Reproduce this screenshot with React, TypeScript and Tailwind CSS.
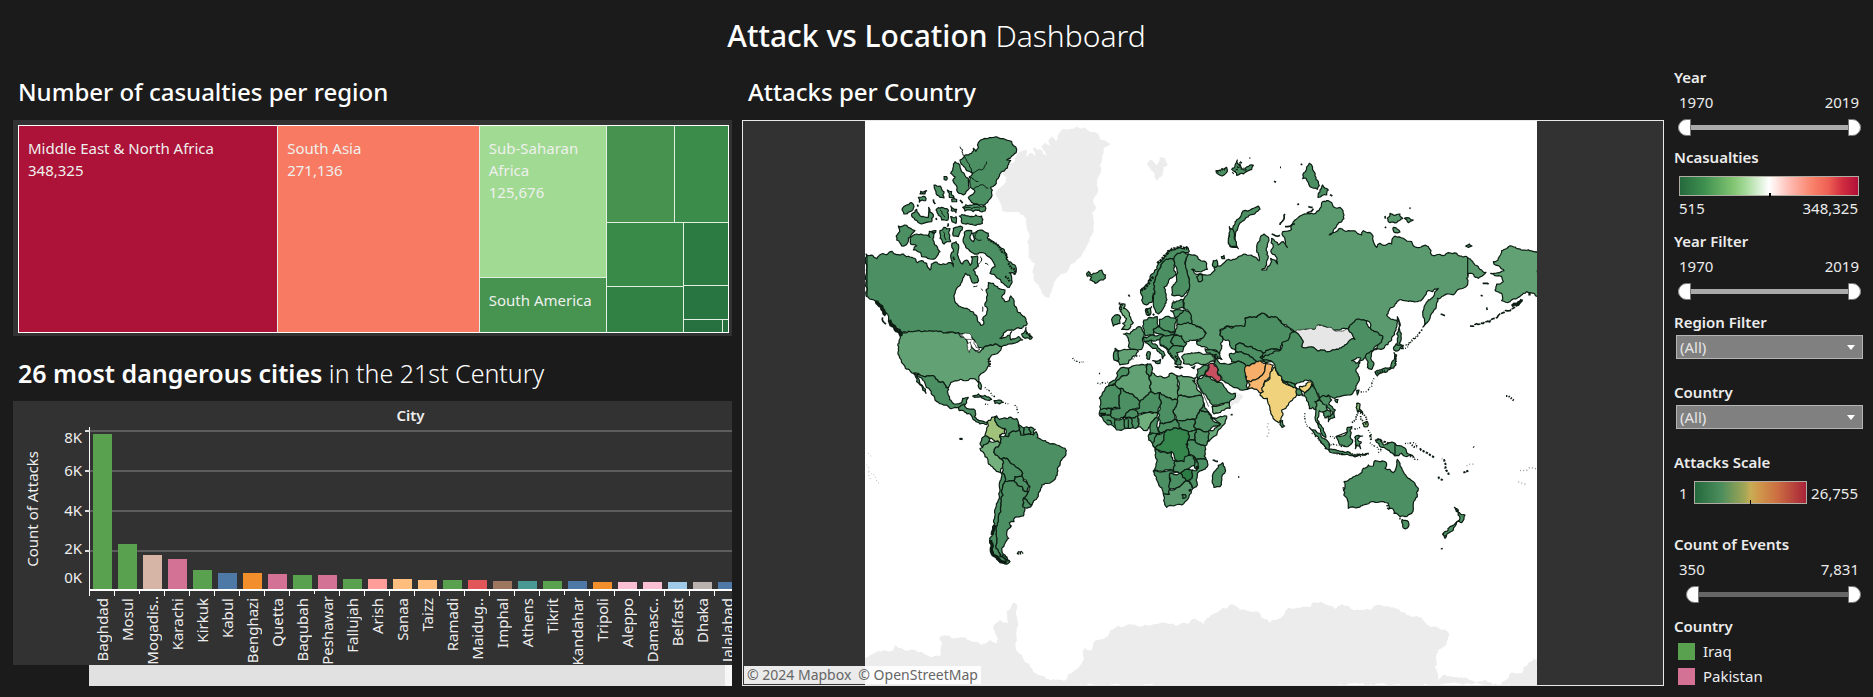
import React from "react";

/* ---------- Map data: outlines are stored per tile at three units per pixel ---------- */

type Shape = [fill: string, points: string];

const G = "#4b8f63";
const G2 = "#5a9a6e";
const G3 = "#61a173";
const G4 = "#70ae7e";

function parse(points: string): number[][] {
  return points.trim().split(/\s+/).map((p) => p.split(",").map(Number));
}

// Adds small bends to an edge; the same edge always bends the same way, so shared borders stay joined.
function bend(a: number[], b: number[], out: number[][]) {
  const len = Math.hypot(b[0] - a[0], b[1] - a[1]);
  if (len < 8) {
    out.push(b);
    return;
  }
  const flip = a[0] > b[0] || (a[0] === b[0] && a[1] > b[1]);
  const [p, q] = flip ? [b, a] : [a, b];
  const h = Math.sin(p[0] * 12.9898 + p[1] * 78.233 + q[0] * 37.719 + q[1] * 11.13) * 43758.5453;
  const r = (h - Math.floor(h) - 0.5) * Math.min(len * 0.42, 9);
  const mid = [
    Math.round((p[0] + q[0]) * 5 - ((q[1] - p[1]) / len) * r * 10) / 10,
    Math.round((p[1] + q[1]) * 5 + ((q[0] - p[0]) / len) * r * 10) / 10,
  ];
  bend(a, mid, out);
  bend(mid, b, out);
}

function outline(points: string, close = true): string {
  const pts = parse(points);
  const out: number[][] = [pts[0]];
  const n = close ? pts.length : pts.length - 1;
  for (let i = 0; i < n; i++) bend(pts[i], pts[(i + 1) % pts.length], out);
  return "M" + out.map((p) => p.join(",")).join("L") + (close ? "Z" : "");
}

const GREY_NORTH = [
  "768,245 790,225 800,205 788,190 800,180 825,150 835,130 860,120 862,140 872,128 885,138 880,112 905,120 908,132 920,138 905,108 915,98 930,110 925,90 935,78 950,92 960,65 990,58 1010,50 1035,52 1050,65 1075,72 1085,90 1112,102 1090,120 1085,140 1078,165 1082,185 1070,210 1075,240 1062,265 1068,290 1055,310 1062,340 1058,370 1045,400 1030,425 1010,450 990,465 975,490 950,505 940,530 930,562 905,550 890,520 878,490 885,460 865,430 862,400 868,375 858,340 850,315 835,305 810,305 785,300 780,280",
  "1222,158 1235,150 1250,165 1258,142 1275,145 1284,162 1270,172 1268,195 1252,214 1244,190 1232,180",
];

const NORTH_AMERICA: Shape[] = [
  [G, "378,432 398,436 410,446 418,436 440,434 456,424 470,434 490,432 500,440 520,444 532,458 545,452 560,460 570,480 574,462 590,456 600,463 620,462 632,458 640,470 632,440 640,425 636,400 648,395 656,415 655,440 668,462 680,450 690,466 694,440 712,438 714,470 700,480 714,505 712,518 695,515 690,497 676,490 668,505 662,520 650,535 645,550 643,565 648,580 665,592 685,598 700,606 710,618 714,635 722,646 732,640 728,625 740,612 742,595 735,580 740,560 738,540 745,535 745,518 760,520 775,535 795,540 785,560 795,575 808,572 812,558 822,580 832,605 845,615 858,628 860,645 845,655 825,658 805,660 790,670 780,685 800,680 815,665 812,690 835,680 848,690 820,700 800,705 785,710 765,702 748,706 730,716 715,712 705,695 690,680 670,672 655,668 640,667 485,669 470,655 455,640 440,610 425,590 405,572 385,562 378,558"],
  [G3, "487,669 640,667 655,668 662,680 680,690 683,705 700,716 715,727 730,716 748,706 765,702 785,710 775,728 755,735 748,745 748,765 740,778 722,792 716,800 724,825 723,838 716,832 710,812 700,806 690,806 678,812 660,808 645,812 632,818 626,833 618,832 608,815 595,815 580,797 560,798 540,795 520,790 495,770 484,750 476,720 478,690"],
  [G, "530,793 540,795 560,798 580,797 595,815 608,815 618,832 626,838 628,860 635,875 650,882 665,878 668,865 685,862 680,878 672,888 665,895 650,893 630,895 605,882 585,870 582,858 570,840 555,820 540,802"],
  [G, "520,790 530,795 538,812 548,828 558,850 548,840 540,825 530,815"],
  [G, "656,892 672,882 680,895 695,897 706,902 703,920 718,932 742,936 740,944 730,940 720,942 710,936 698,925 690,912 674,906 658,902"],
  [G, "698,858 715,852 735,856 755,868 740,870 722,860"],
  [G, "762,872 775,870 790,877 778,882 765,880"],
  [G, "660,150 675,135 695,130 700,115 708,124 715,98 735,85 760,82 790,86 815,95 830,118 820,135 800,150 812,152 795,180 775,205 765,225 752,232 755,250 745,272 738,280 720,285 700,280 685,262 705,245 690,225 688,200 698,192 680,182 668,165"],
  [G, "645,155 655,160 665,185 685,205 688,235 670,255 650,240 640,215 645,200 632,190 640,170"],
  [G, "668,292 690,285 735,288 735,303 700,305 675,303"],
  [G, "658,318 690,320 725,318 727,340 700,345 665,338"],
  [G, "582,225 600,228 612,245 612,264 600,262 588,245"],
  [G, "622,240 635,245 642,262 628,262"],
  [G, "535,262 555,260 557,272 538,276"],
  [G, "542,244 560,242 555,252 540,252"],
  [G, "486,300 500,285 515,278 522,290 510,305 492,312"],
  [G, "515,312 530,298 545,320 565,322 566,292 580,318 575,335 545,342 525,330"],
  [G, "588,300 605,292 625,300 624,330 605,330 595,315"],
  [G, "632,288 650,298 648,308 634,302"],
  [G, "632,320 648,320 648,340 636,335"],
  [G, "635,268 650,268 650,275 636,275"],
  [G, "475,348 500,346 525,362 505,385 498,405 485,408 470,390"],
  [G, "510,385 530,372 555,375 570,382 568,364 588,362 582,395 600,425 590,440 570,447 545,440 542,428 520,420 530,408 512,402"],
  [G, "600,362 612,352 630,356 632,395 612,402 600,385"],
  [G, "640,355 668,352 655,380 640,378"],
  [G, "672,380 680,362 695,362 690,385 700,395 698,370 720,360 745,370 742,385 765,400 785,415 800,440 805,455 828,472 825,492 808,488 815,510 808,532 790,520 770,503 750,490 765,470 745,440 735,430 718,428 700,430 680,415 672,400"],
  [G, "845,672 858,652 862,668 877,682 870,688 850,682"],
  [G, "612,200 620,200 620,210 612,208"],
];

const NORTH_WATER = [
  "664,676 680,670 695,678 698,688 680,688",
  "684,700 692,696 694,715 688,728 682,716",
  "703,690 712,704 716,715 708,712",
  "706,724 720,716 718,728",
];

const SOUTH_AMERICA: Shape[] = [
  ["#a0c27a", "742,245 755,232 770,228 765,242 772,255 792,260 795,280 780,285 782,308 765,305 750,295 735,288 740,270"],
  [G, "770,228 778,238 800,236 830,236 835,255 838,270 815,275 805,290 795,288 795,265 772,255 765,242"],
  [G, "835,250 852,264 855,285 842,285 838,270"],
  [G, "852,264 868,263 872,283 855,285"],
  [G, "868,263 886,268 880,285 872,283"],
  [G, "780,285 795,288 805,290 815,275 838,270 842,285 855,285 872,283 880,285 888,275 892,293 905,300 925,308 950,315 975,325 978,340 965,360 955,380 952,405 940,422 915,430 902,445 895,465 885,480 876,494 862,485 850,475 865,455 870,440 862,428 848,415 848,400 835,385 815,372 800,355 785,358 775,350 765,345 762,328 775,320 782,308"],
  [G, "725,295 735,288 750,295 748,302 740,312 728,322 720,312"],
  ["#74b07d", "720,325 728,322 740,312 748,302 765,305 782,308 775,320 762,328 765,345 775,350 785,358 788,380 782,398 760,385 745,372 735,350 722,332"],
  [G, "785,358 800,355 815,372 835,385 848,400 845,408 825,410 822,422 795,424 788,400 788,380"],
  [G, "825,410 845,408 850,422 868,438 862,455 848,450 846,440 830,430 822,422"],
  [G, "795,424 822,422 830,430 846,440 848,450 862,455 865,455 850,475 848,495 855,510 850,528 825,532 822,545 808,548 812,562 802,570 800,585 806,595 795,610 785,625 795,645 802,660 780,650 768,625 768,580 775,540 782,490 788,440"],
  [G, "782,398 788,400 795,424 788,440 782,490 775,540 768,580 768,625 780,650 802,660 810,665 795,672 770,658 754,630 750,600 758,570 764,530 775,480 778,430"],
  [G, "850,475 862,485 876,494 865,503 848,500"],
];

const EUROPE: Shape[] = [
  [G, "80,130 86,124 92,134 100,130 125,120 137,135 130,150 105,160 90,150 95,142 82,138"],
  [G4, "182,222 195,222 190,235 205,245 213,268 220,278 210,294 185,298 195,286 188,280 200,266 186,250 178,235"],
  [G, "158,262 172,254 182,262 180,280 160,288"],
  [G, "242,180 265,160 280,130 295,100 320,70 350,55 380,50 388,64 370,66 342,85 310,95 300,115 285,150 285,185 278,215 260,225 245,210"],
  [G, "285,185 285,150 300,115 310,95 330,85 342,92 348,130 330,145 325,158 312,172 318,200 310,235 295,252 285,238 280,210"],
  [G, "342,85 360,70 370,66 385,72 378,90 380,120 388,150 388,175 365,200 335,195 340,165 350,148 348,110"],
  [G, "258,236 275,230 270,255 262,256"],
  [G, "252,270 268,262 292,260 298,290 280,298 285,318 258,318 250,295"],
  [G, "298,268 330,262 350,270 347,305 315,302 298,290"],
  [G, "338,218 372,208 372,235 350,238 335,234"],
  [G, "332,242 350,238 372,240 362,262 345,262"],
  [G, "350,262 372,240 390,250 395,280 352,284"],
  [G2, "350,285 395,281 425,295 438,310 425,325 410,335 412,328 390,330 375,338 365,318 342,312"],
  [G2, "190,312 210,312 225,298 240,290 252,310 248,325 250,345 245,358 220,360 205,350 205,325"],
  [G3, "165,355 205,358 235,364 215,385 205,400 180,405 175,392"],
  [G, "165,362 177,362 175,395 162,390"],
  [G, "280,298 298,290 315,302 345,305 342,314 310,315 285,308"],
  [G, "250,322 285,318 310,315 300,330 275,332 252,334"],
  [G, "255,335 275,330 278,342 300,358 315,376 308,386 300,370 275,352 262,340"],
  [G, "278,392 302,388 300,400"],
  [G, "262,366 270,366 268,388 260,385"],
  [G, "300,330 310,315 342,314 332,335 340,350 325,362 300,342"],
  [G, "342,314 365,318 380,340 372,350 340,350 332,335"],
  [G, "335,350 372,350 368,365 350,368 358,385 362,405 345,402 332,378 325,362"],
  ["#69a97a", "365,380 380,372 420,368 455,372 464,395 440,402 420,402 392,406 370,400"],
  [G, "435,356 462,362 478,372 486,388 470,386 458,374 440,368"],
  [G, "395,412 405,408 402,416"],
  [G, "345,410 368,412 360,416"],
  [G, "480,300 500,288 520,292 555,288 555,265 590,262 605,250 625,262 645,260 665,280 690,295 708,308 695,320 690,330 665,345 662,360 630,358 610,370 590,360 560,350 540,338 528,345 528,365 515,355 505,330 490,328 480,315"],
  [G, "528,345 540,338 560,350 590,360 610,370 622,378 615,395 598,396 570,380 548,368 528,365"],
  [G, "508,372 528,365 548,368 570,380 598,396 575,402 558,408 535,393 515,396"],
  [G, "600,382 610,370 630,358 662,360 656,374 632,380 640,394 618,398"],
  [G, "462,374 475,395 500,402 515,400 535,393 558,408 556,440 562,478 535,475 510,465 485,450 472,430 470,410 462,400"],
  ["#c64f60", "445,405 460,400 470,410 472,430 482,450 470,455 450,440 435,432 445,418"],
  ["#f7ae6a", "558,408 575,402 605,396 618,400 615,415 600,440 585,450 560,452 556,430"],
  ["#f8b76f", "562,478 570,465 560,452 585,450 600,440 615,415 618,400 640,405 635,425 625,445 610,465 612,485 598,488 590,478"],
];

const AFRICA: Shape[] = [
  [G, "188,22 205,25 205,42 180,55 165,72 150,82 146,76 165,60 170,40"],
  [G, "165,72 180,86 180,145 150,145 122,148 118,115 130,95 140,80"],
  [G3, "205,25 230,15 262,12 260,30 268,50 272,95 240,125 180,86 165,72 180,55 205,42"],
  [G, "262,12 272,12 275,38 268,50 260,30"],
  [G3, "268,50 275,38 300,48 320,52 330,40 352,48 352,120 300,98 285,102 272,95"],
  [G3, "352,48 375,50 400,55 412,50 405,65 398,62 425,108 355,108"],
  [G, "180,86 240,125 238,145 210,150 190,172 165,178 150,165 158,148 180,145"],
  [G, "240,125 272,95 285,102 300,98 300,140 292,158 240,162 225,150 238,145"],
  [G, "300,98 352,120 340,150 345,178 320,188 300,190 296,175 300,140"],
  [G2, "355,108 425,108 432,130 420,150 405,178 375,182 348,178 340,150 352,120"],
  [G, "348,178 375,182 405,178 408,208 385,215 362,205"],
  [G, "420,150 445,155 456,178 480,190 445,214 430,215 408,208 405,178"],
  [G, "432,130 440,148 458,174 452,174 440,155 420,150"],
  ["#6cab7c", "456,176 475,172 500,168 495,190 470,225 446,245 445,214 482,192"],
  [G, "408,208 430,215 445,214 446,240 435,258 405,240"],
  [G, "385,215 408,208 405,240 384,240"],
  [G, "384,240 405,240 435,258 438,298 410,298 385,285 380,262"],
  [G, "120,150 140,148 158,148 150,165 138,168 120,168 118,158"],
  [G, "122,168 150,165 165,178 168,205 145,195 130,180"],
  [G, "165,178 190,175 195,205 170,210"],
  [G, "190,172 210,150 225,150 235,165 215,175"],
  [G, "195,176 215,175 218,203 196,206"],
  [G, "215,175 232,168 234,200 220,204"],
  [G4, "236,165 262,158 292,158 290,172 270,200 258,212 234,200"],
  [G, "270,200 290,172 296,180 294,205 300,222 268,220"],
  [G, "300,190 320,188 345,178 362,205 320,210 300,218 294,205"],
  [G, "266,224 290,222 284,245 280,260 266,240"],
  [G, "290,222 318,212 305,250 285,264 280,258"],
  ["#34864d", "320,210 362,205 385,215 384,240 380,262 385,285 372,305 345,298 335,275 305,275 285,266 305,250"],
  [G, "285,268 310,275 335,278 338,300 345,302 338,332 280,332 292,300"],
  [G, "345,302 372,305 375,290 400,288 408,315 380,328 362,340 340,332"],
  [G, "400,288 408,300 416,320 410,332 404,315"],
  ["#2b7d45", "362,340 380,328 398,330 396,355 378,362 368,352"],
  [G, "410,298 438,298 442,320 412,345 412,375 395,385 388,365 396,355 398,330 410,332 414,316"],
  [G, "280,334 310,334 355,336 330,340 328,405 310,402 295,370"],
  [G, "330,340 362,340 368,352 378,362 345,388 328,385"],
  [G2, "310,402 328,403 328,388 345,388 378,362 388,365 398,385 385,415 365,435 320,442"],
  [G, "366,404 376,404 378,412 368,415"],
  [G, "488,308 495,325 480,380 462,382 458,355 468,330"],
  [G, "412,60 432,44 450,50 465,62 490,75 500,90 508,98 526,100 520,118 508,128 458,136 430,100 415,75"],
  [G4, "456,140 508,128 510,145 462,162"],
  [G, "412,28 440,14 445,25 435,42 432,46 412,60 410,45"],
];

const RUSSIA: Shape[] = [
  [G2, "-35,432 -10,438 20,460 22,478 5,485 -25,478 -18,488 5,492 8,510 -5,515 -10,500 25,495 45,480 40,455 55,468 80,450 105,448 115,440 135,432 160,440 178,452 175,430 170,410 180,385 192,372 203,380 202,410 205,440 200,465 185,480 200,480 210,465 212,445 232,462 230,442 215,430 220,410 215,385 235,405 250,395 262,412 255,390 248,365 275,358 285,330 300,318 340,312 360,295 368,275 385,272 400,290 420,292 432,315 425,335 400,360 388,375 420,355 445,362 470,368 485,375 490,362 515,372 522,400 530,412 540,400 575,402 585,378 610,385 635,395 650,412 685,410 695,435 735,435 745,428 770,430 800,440 825,465 858,487 850,495 835,505 805,490 800,505 798,530 765,550 730,558 712,565 708,595 690,625 672,648 668,605 675,585 700,560 715,535 698,545 680,545 665,570 630,572 595,572 570,595 560,615 578,628 590,630 588,655 575,690 550,716 520,720 548,680 520,665 500,632 475,632 465,645 445,655 400,660 375,650 355,645 345,658 320,658 288,668 270,655 245,640 225,620 205,622 185,610 170,622 135,625 135,648 100,652 80,648 60,660 60,675 70,688 62,700 65,715 60,730 50,722 25,718 5,710 -10,695 5,685 18,670 5,655 -25,640 -30,610 -48,595 -50,575 -45,560 -32,535 -32,510 -40,480 -42,450"],
  [G, "85,400 90,370 105,335 125,310 150,300 175,288 180,298 150,315 125,335 112,360 105,385 112,412 90,410"],
  [G, "316,185 328,160 342,185 345,198 355,215 352,238 330,230 318,205 308,206"],
  [G, "368,225 385,240 380,255 354,262 360,240"],
  [G2, "562,325 570,310 585,316 600,312 608,325 590,338 570,338"],
  [G2, "613,325 640,330 625,338"],
  [G2, "580,352 600,366 585,368"],
  [G, "797,408 808,402 816,408 805,412"],
  [G, "48,182 62,180 80,172 82,184 66,198"],
  [G, "95,178 112,150 122,168 135,180 150,165 160,166 155,178 130,192 110,196"],
  [G, "592,620 598,650 604,670 598,700 610,716 590,716 592,690"],
  [G3, "1013,428 975,420 935,408 905,422 895,445 880,455 900,470 912,482 872,490 885,497 905,500 910,515 890,522 885,540 905,550 905,572 930,575 955,562 970,550 990,548 1013,560"],
];

const ASIA: Shape[] = [
  [G, "45,105 5,85 30,72 62,60 65,40 85,30 90,12 105,5 130,35 125,50 170,60 200,66 235,58 265,35 285,28 268,5 270,-15 285,-28 320,-28 335,0 368,18 360,40 340,60 318,80 296,95 302,84 280,90 275,92 288,100 300,98 288,118 298,150 285,180 265,195 240,200 225,205 205,195 185,200 180,210 165,180 150,150 130,155 105,165 65,148 50,125"],
  ["#f0d27c", "32,125 45,112 52,130 65,148 70,158 105,170 110,195 100,205 85,225 65,240 65,260 55,278 42,268 30,235 22,205 10,205 0,195 10,185 5,175 15,155 30,145"],
  ["#f0d27c", "118,170 135,168 145,156 158,156 152,172 145,180 135,190 122,180"],
  [G, "65,148 105,165 105,172 70,158"],
  [G, "108,172 122,180 130,198 114,196"],
  [G, "60,272 68,272 74,288 66,292"],
  [G, "132,195 145,180 152,172 158,163 168,182 178,205 165,215 168,240 158,232 148,236 140,212"],
  [G3, "165,215 178,210 200,225 202,240 188,246 178,242 172,265 176,285 166,270 168,240"],
  [G, "178,205 190,196 210,198 215,210 206,222 226,240 224,262 205,275 204,262 218,252 200,225 182,212"],
  [G, "188,246 202,240 212,246 210,260 195,264"],
  [G, "172,278 190,295 198,322 182,305"],
  [G, "148,292 165,300 190,325 210,345 208,360 185,340 165,315"],
  [G, "206,360 240,364 270,368 298,372 325,370 295,377 250,373"],
  [G, "228,320 245,318 262,305 262,292 276,290 272,315 278,330 264,350 240,345"],
  [G, "284,322 308,318 292,328 304,336 298,342 302,356 290,345 286,356"],
  ["#82b571", "290,220 300,222 298,238 308,250 292,244"],
  ["#82b571", "308,280 322,275 322,290 312,290"],
  [G, "346,330 362,328 370,345 386,338 405,340 430,352 440,368 462,382 440,380 425,370 405,378 388,362 366,352"],
  [G, "290,182 297,180 292,195"],
  [G, "224,210 234,208 232,218"],
  [G, "316,78 340,62 332,84 342,102 335,118 322,112 324,95"],
  [G, "345,126 370,116 392,112 402,90 402,68 410,75 408,105 390,118 370,126 352,138"],
  [G, "408,42 430,48 415,62 402,60"],
  [G, "252,455 275,445 295,435 310,415 325,405 340,408 345,392 375,395 380,405 375,415 400,428 408,415 412,388 420,400 430,425 445,445 460,455 475,475 472,500 460,520 455,550 435,560 420,560 402,550 395,535 386,538 385,520 365,515 340,515 310,525 295,532 265,535 262,510 250,480"],
  [G, "425,574 445,575 442,594 430,594"],
  [G, "583,532 600,550 615,555 605,578 590,576 600,562"],
  [G, "590,576 580,600 555,625 548,612 570,590"],
];

const MONGOLIA = "105,5 140,-2 165,-2 175,-15 195,-10 220,0 265,-2 268,5 285,28 265,35 235,58 200,66 170,60 125,50 130,35";

const GREY_SOUTH = [
  "0,330 12,328 45,335 55,312 95,280 103,235 125,240 135,212 175,195 180,180 240,162 260,167 360,162 380,167 408,160 435,145 460,162 470,145 500,128 530,115 548,102 570,122 630,130 660,158 680,150 720,112 780,112 785,98 825,102 855,116 875,103 905,118 965,118 980,105 1030,112 1070,135 1110,142 1145,170 1185,178 1198,195 1190,222 1165,240 1155,290 1165,330 1180,315 1235,322 1275,335 1350,345 0,350",
  "1350,345 1375,325 1385,308 1415,310 1420,290 1450,267 1465,266 1465,350",
];

const GREY_SOUTH_WEST =
  "372,960 410,935 460,930 465,915 490,928 545,935 570,950 600,950 598,890 630,888 690,902 725,915 750,900 770,910 760,865 780,840 805,850 800,815 822,788 832,800 835,940 865,970 895,1005 935,1025 970,1022 990,1000 990,1040 372,1040";

function Regions({ shapes }: { shapes: Shape[] }) {
  return (
    <>
      {shapes.map(([fill, points], i) => (
        <path key={i} d={outline(points)} fill={fill} />
      ))}
    </>
  );
}

function Islands({ lines, width = 3, dash = "3 5 2 4 5 6" }: { lines: string[]; width?: number; dash?: string }) {
  return (
    <>
      {lines.map((l, i) => (
        <path key={i} d={outline(l, false)} fill="none" strokeWidth={width} strokeDasharray={dash} />
      ))}
    </>
  );
}

function WorldMap() {
  return (
    <svg
      viewBox="865 121 672 564"
      className="mx-auto block h-[564px] max-w-full bg-white"
      role="img"
      aria-label="World map of attacks per country"
    >
      <g fill="#ececec">
        <g transform="translate(740 110) scale(0.33333)">
          {GREY_NORTH.map((p, i) => (
            <path key={i} d={outline(p)} />
          ))}
        </g>
        <path transform="translate(740 340) scale(0.33333)" d={outline(GREY_SOUTH_WEST)} />
        <g transform="translate(1050 570) scale(0.33333)">
          {GREY_SOUTH.map((p, i) => (
            <path key={i} d={outline(p)} />
          ))}
        </g>
        <path transform="translate(1060 360) scale(0.33333)" d={outline("526,95 548,105 538,125 512,142 508,128 520,118")} />
      </g>
      <g stroke="#0d1d13" strokeWidth="3.6" strokeLinejoin="round">
        <g transform="translate(1200 110) scale(0.33333)">
          <Regions shapes={RUSSIA} />
          <path d="M803 442V498" />
          <Islands lines={["810,648 850,640 885,625 930,602 960,578"]} width={5} dash="12 3 20 2" />
          <Islands lines={["935,588 952,582 965,568", "985,552 992,552"]} width={9} dash="none" />
          <Islands lines={["98,190 125,155 120,175 140,182", "52,186 76,178"]} width={7} dash="3 5" />
          <Islands lines={["240,172 243,172", "222,214 228,217", "302,162 307,164", "390,254 397,258", "292,284 297,281", "325,290 338,292", "340,296 320,310", "255,312 250,330 240,345", "255,350 285,342", "215,372 240,376", "555,318 556,326", "628,294 632,295", "842,556 848,558", "848,520 866,522", "722,612 735,617", "860,592 862,600", "555,350 558,354", "148,144 151,144"]} width={5} dash="none" />
          <Islands lines={["672,648 655,675 635,695 605,712"]} width={4} dash="6 7 4 6" />
        </g>
        <g transform="translate(740 110) scale(0.33333)">
          <Regions shapes={NORTH_AMERICA} />
          <g fill="#ffffff" strokeWidth="2">
            {NORTH_WATER.map((p, i) => (
              <path key={i} d={outline(p)} />
            ))}
          </g>
          <path d="M381 434V560" />
          <Islands lines={["410,572 425,590 438,615", "448,630 465,655 484,678"]} width={11} dash="none" />
          <Islands lines={["428,622 438,642"]} width={5} dash="none" />
          <Islands lines={["745,388 770,402 795,430 800,450", "805,460 826,482 822,494", "745,745 748,770", "795,500 810,515", "858,668 876,684"]} width={7} dash="5 3" />
          <Islands lines={["720,440 725,450 715,470", "735,460 745,465", "700,530 712,528", "724,536 728,542", "728,590 728,605", "725,628 728,632", "660,110 700,190", "690,200 715,215", "740,155 725,180 700,188", "700,240 720,225 745,235", "712,365 705,385 725,390", "600,300 615,322", "610,365 618,390", "672,295 720,295"]} width={3} dash="none" />
          <Islands lines={["735,832 750,845 765,862", "825,885 832,900 835,912", "735,882 748,882", "795,880 808,882"]} width={4} />
          <Islands lines={["532,284 535,290", "580,268 586,282", "588,324 590,330", "622,350 624,340", "575,366 584,368", "660,270 668,280", "640,440 644,450"]} width={5} dash="none" />
        </g>
        <g transform="translate(740 340) scale(0.33333)">
          <Regions shapes={SOUTH_AMERICA} />
          <Islands lines={["752,600 754,625 765,648 780,662 798,670", "765,555 757,585"]} width={10} dash="none" />
          <Islands lines={["780,645 795,655 808,664"]} width={7} dash="4 2" />
          <Islands lines={["832,637 848,636"]} width={10} dash="5 2" />
          <Islands lines={["658,297 668,298", "810,558 815,558"]} width={6} dash="none" />
          <g stroke="#999999">
            <Islands lines={["385,340 395,352", "380,375 400,402 418,430", "385,395 392,420"]} width={3} dash="2 8" />
          </g>
        </g>
        <g transform="translate(1060 360) scale(0.33333)">
          <Regions shapes={AFRICA} />
          <path d="M120 160H138M140 180L152 182 156 192M205 178V204" fill="none" />
          <Islands lines={["122,162 136,164", "380,250 382,256", "388,388 392,394", "411,318 412,328"]} width={8} dash="none" />
          <Islands lines={["112,70 145,66"]} width={4} />
          <Islands lines={["512,164 518,164", "534,351 538,351", "458,300 474,304", "117,40 120,41"]} width={5} dash="none" />
        </g>
        <g transform="translate(1060 230) scale(0.33333)">
          <Regions shapes={EUROPE} />
          <Islands lines={["244,182 262,166 280,140", "292,100 320,72 350,54 382,54"]} width={8} dash="7 3" />
          <Islands lines={["176,220 186,225 182,245", "205,198 210,195"]} width={7} dash="5 3" />
          <Islands lines={["262,236 268,256", "278,252 284,256", "345,378 352,388 346,402", "300,345 325,365 340,385", "605,378 615,386", "466,372 476,384"]} width={6} dash="6 2" />
          <Islands lines={["38,384 72,396", "218,388 240,378", "92,128 82,140", "340,212 344,222"]} width={4} />
          <path d="M408 450L425 480 446 530" fill="none" strokeWidth="2" />
          <path d={outline("460,92 470,90 468,112 458,108")} fill={G} />
          <path d={outline("484,80 492,76 494,86 486,86")} fill={G} />
          <path d={outline("508,-10 520,0 525,30 535,56 515,50 505,30")} fill={G} />
        </g>
        <g transform="translate(1260 330) scale(0.33333)">
          <path d={outline(MONGOLIA)} fill="#e6e6e6" strokeWidth="2" />
          <Regions shapes={ASIA} />
          <path d="M405 340V376M228 320L262 306" fill="none" />
          <Islands lines={["300,248 318,262 315,285", "302,258 310,276", "296,240 288,262 275,280"]} width={5} dash="4 3" />
          <Islands lines={["345,130 360,126 375,122", "408,78 404,104"]} width={6} dash="4 3" />
          <Islands lines={["135,250 135,270 142,290", "155,310 180,335 200,360", "210,320 225,325", "205,345 260,350", "300,380 330,374", "300,292 275,296", "325,300 335,330", "330,338 365,360", "355,368 365,362", "342,145 338,165 325,180 302,186", "435,55 485,0", "435,340 460,338 472,350", "450,380 478,388", "230,372 320,374"]} width={4} />
          <Islands lines={["480,355 500,368 522,382", "552,388 556,415 565,438", "535,440 550,452", "610,428 625,422", "330,315 333,330", "350,330 385,340"]} width={6} dash="7 4" />
          <Islands lines={["738,198 762,212", "382,525 386,540", "418,565 428,572", "548,612 556,620", "585,536 596,550", "250,472 254,480", "545,654 546,660", "640,350 642,352", "455,345 470,352"]} width={6} dash="4 4" />
          <g stroke="#999999">
            <Islands lines={["780,422 830,415", "775,455 800,462", "25,280 25,325", "545,385 550,388", "640,402 615,410"]} width={4} dash="3 7" />
          </g>
        </g>
      </g>
    </svg>
  );
}

/* ---------- Treemap ---------- */

function Treemap() {
  return (
    <div className="bg-[#323232] pt-[5px] pr-[3px] pb-[3px] pl-[5px]">
      <div className="grid h-[208px] grid-cols-[260fr_202fr_127fr_122fr] gap-px border border-white bg-[#e2efe2] text-[15px] leading-[22px] text-[#eef0ee]">
        <div className="bg-[#ad1238] px-[9px] pt-[11px]">
          <p>Middle East &amp; North Africa</p>
          <p>348,325</p>
        </div>
        <div className="bg-[#f97a62] px-[9px] pt-[11px]">
          <p>South Asia</p>
          <p>271,136</p>
        </div>
        <div className="grid grid-rows-[152fr_54fr] gap-px">
          <div className="bg-[#a1da92] px-[9px] pt-[11px]">
            <p>Sub-Saharan</p>
            <p>Africa</p>
            <p>125,676</p>
          </div>
          <div className="bg-[#469450] pt-[11px] pl-[9px] whitespace-nowrap">South America</div>
        </div>
        <div className="grid grid-rows-[97fr_110fr] gap-px">
          <div className="grid grid-cols-[68fr_54fr] gap-px">
            <div className="bg-[#46924e]" />
            <div className="bg-[#3b8c4b]" />
          </div>
          <div className="grid grid-cols-[77fr_45fr] gap-px">
            <div className="grid grid-rows-[63fr_45fr] gap-px">
              <div className="bg-[#398949]" />
              <div className="bg-[#308143]" />
            </div>
            <div className="grid grid-rows-[62fr_33fr_12fr] gap-px">
              <div className="bg-[#2c7b42]" />
              <div className="bg-[#297541]" />
              <div className="grid grid-cols-[39fr_5fr] gap-px">
                <div className="bg-[#27703f]" />
                <div className="bg-[#27703f]" />
              </div>
            </div>
          </div>
        </div>
      </div>
    </div>
  );
}

/* ---------- Bar chart ---------- */

const CITIES: [name: string, height: number, color: string][] = [
  ["Baghdad", 155, "bg-[#59a14f]"],
  ["Mosul", 45, "bg-[#59a14f]"],
  ["Mogadis..", 34, "bg-[#d7b5a6]"],
  ["Karachi", 30, "bg-[#d37295]"],
  ["Kirkuk", 19, "bg-[#59a14f]"],
  ["Kabul", 16, "bg-[#4e79a7]"],
  ["Benghazi", 16, "bg-[#f28e2b]"],
  ["Quetta", 15, "bg-[#d37295]"],
  ["Baqubah", 14, "bg-[#59a14f]"],
  ["Peshawar", 14, "bg-[#d37295]"],
  ["Fallujah", 10, "bg-[#59a14f]"],
  ["Arish", 10, "bg-[#ff9d9a]"],
  ["Sanaa", 10, "bg-[#ffbe7d]"],
  ["Taizz", 9, "bg-[#ffbe7d]"],
  ["Ramadi", 9, "bg-[#59a14f]"],
  ["Maidug..", 9, "bg-[#e15759]"],
  ["Imphal", 8, "bg-[#9d7660]"],
  ["Athens", 8, "bg-[#499894]"],
  ["Tikrit", 8, "bg-[#59a14f]"],
  ["Kandahar", 8, "bg-[#4e79a7]"],
  ["Tripoli", 7, "bg-[#f28e2b]"],
  ["Aleppo", 7, "bg-[#fabfd2]"],
  ["Damasc..", 7, "bg-[#fabfd2]"],
  ["Belfast", 7, "bg-[#a0cbe8]"],
  ["Dhaka", 7, "bg-[#bab0ac]"],
  ["Jalalabad", 7, "bg-[#4e79a7]"],
];

function BarChart() {
  return (
    <div>
      <div className="grid h-[264px] grid-cols-[76px_minmax(0,1fr)] grid-rows-[26px_164px_74px] bg-[#323232] text-[#eeeeee]">
        <h3 className="col-span-2 pl-[76px] text-center text-[15px] leading-[28px] font-semibold">City</h3>
        <div className="flex justify-between pr-[7px] pl-[9px]">
          <span className="rotate-180 self-center text-center text-[15px] leading-[20px] whitespace-nowrap [writing-mode:vertical-rl]">
            Count of Attacks
          </span>
          <div className="grid grid-rows-[33px_40px_38px_29px_20px] content-start text-right text-[15px] leading-[20px]">
            <span>8K</span>
            <span>6K</span>
            <span>4K</span>
            <span>2K</span>
            <span>0K</span>
          </div>
        </div>
        <div className="relative border-b-2 border-l border-white">
          <div className="absolute inset-x-0 top-[3px] -left-[5px] flex flex-col gap-[38px]" aria-hidden="true">
            {[8, 6, 4, 2].map((k) => (
              <div key={k} className="flex h-[2px]">
                <div className="w-[5px] bg-[#dddddd]" />
                <div className="flex-1 bg-[#5c5c5c]" />
              </div>
            ))}
          </div>
          <div className="absolute inset-0 flex items-end overflow-hidden">
            {CITIES.map(([name, height, color]) => (
              <div key={name} className="w-[25px] shrink-0 pr-[3px] pl-[3px]">
                <div className={color} style={{ height }} />
              </div>
            ))}
          </div>
        </div>
        <div className="col-start-2 flex overflow-hidden">
          {CITIES.map(([name]) => (
            <div key={name} className="flex w-[25px] shrink-0 flex-col items-center">
              <div className="h-[5px] w-px self-start bg-white" />
              <span className="rotate-180 pb-[2px] text-[15px] leading-[20px] whitespace-nowrap [writing-mode:vertical-rl]">{name}</span>
            </div>
          ))}
        </div>
      </div>
      <div className="ml-[76px] flex h-[21px] bg-[#e1e1e1]">
        <div className="ml-auto w-[7px] bg-[#f7f7f7]" />
      </div>
    </div>
  );
}

/* ---------- Sidebar controls ---------- */

const THUMB =
  "h-6 w-1/2 appearance-none bg-transparent [&::-webkit-slider-runnable-track]:h-[5px] [&::-webkit-slider-thumb]:-mt-[6px] [&::-webkit-slider-thumb]:h-[17px] [&::-webkit-slider-thumb]:w-[13px] [&::-webkit-slider-thumb]:appearance-none [&::-webkit-slider-thumb]:border [&::-webkit-slider-thumb]:border-[#777777] [&::-webkit-slider-thumb]:bg-white";

function RangeFilter({ label, from, to, min, max, muted }: { label: string; from: string; to: string; min: number; max: number; muted?: boolean }) {
  const track = muted
    ? "[&::-webkit-slider-runnable-track]:bg-[#666666]"
    : "[&::-webkit-slider-runnable-track]:bg-[#aaaaaa]";
  return (
    <fieldset>
      <legend className="text-[15px] leading-[20px] font-semibold">{label}</legend>
      <div className="mt-[5px] flex justify-between pr-1 pl-[5px] text-[15px] leading-[20px]">
        <span>{from}</span>
        <span>{to}</span>
      </div>
      <div className={muted ? "mt-[3px] flex pr-[2px] pl-3" : "mt-[3px] flex pr-[2px] pl-1"}>
        <input
          type="range"
          aria-label={label + " from"}
          min={min}
          max={max}
          defaultValue={min}
          className={THUMB + " [&::-webkit-slider-thumb]:rounded-l-full " + track}
        />
        <input
          type="range"
          aria-label={label + " to"}
          min={min}
          max={max}
          defaultValue={max}
          className={THUMB + " [&::-webkit-slider-thumb]:rounded-r-full " + track}
        />
      </div>
    </fieldset>
  );
}

function SelectFilter({ id, label }: { id: string; label: string }) {
  return (
    <div>
      <label htmlFor={id} className="block text-[15px] leading-[20px] font-semibold">
        {label}
      </label>
      <div className="relative mt-[3px] ml-[2px]">
        <select id={id} className="block h-6 w-full appearance-none border border-[#b5b5b5] bg-[#808080] pl-[3px] text-[15px] leading-[20px] text-[#e6e6e6]">
          <option>(All)</option>
        </select>
        <svg viewBox="0 0 8 5" className="pointer-events-none absolute top-[10px] right-2 h-[5px] w-2" aria-hidden="true">
          <path d="M0 0H8L4 5Z" fill="#ffffff" />
        </svg>
      </div>
    </div>
  );
}

function Sidebar() {
  return (
    <aside className="pt-[67px] text-[#ececec]">
      <RangeFilter label="Year" from="1970" to="2019" min={1970} max={2019} />
      <section className="mt-2">
        <h3 className="text-[15px] leading-[20px] font-semibold">Ncasualties</h3>
        <div className="relative mt-[9px] mr-1 ml-[5px] h-5 border border-[#b0aca4] bg-[linear-gradient(90deg,#24693d,#3f9150_14%,#82c572_30%,#a5da9a_37%,#ffffff_50%,#ffb9b0_62%,#f9836c_74%,#ee6154_83%,#d22e40_91%,#b10f38)]">
          <div className="absolute -bottom-[2px] left-1/2 h-1 w-[2px] bg-black" />
        </div>
        <div className="mt-[2px] mr-[5px] ml-[5px] flex justify-between text-[15px] leading-[20px]">
          <span>515</span>
          <span>348,325</span>
        </div>
      </section>
      <div className="mt-[13px]">
        <RangeFilter label="Year Filter" from="1970" to="2019" min={1970} max={2019} />
      </div>
      <div className="mt-[9px]">
        <SelectFilter id="region-filter" label="Region Filter" />
      </div>
      <div className="mt-[23px]">
        <SelectFilter id="country-filter" label="Country" />
      </div>
      <section className="mt-[23px]">
        <h3 className="text-[15px] leading-[20px] font-semibold">Attacks Scale</h3>
        <div className="mt-[9px] flex items-center justify-between pr-[5px] pl-[5px] text-[15px] leading-[20px]">
          <span>1</span>
          <div className="relative mr-1 ml-[6px] h-[23px] flex-1 border border-[#b0aca4] bg-[linear-gradient(90deg,#24693d,#4d8e5c_24%,#a3a656_45%,#c8ad55_50%,#cf9a4c_57%,#cc6f42_74%,#a82338)]">
            <div className="absolute -bottom-[2px] left-1/2 h-[5px] w-px bg-black" />
          </div>
          <span>26,755</span>
        </div>
      </section>
      <div className="mt-[30px]">
        <RangeFilter label="Count of Events" from="350" to="7,831" min={350} max={7831} muted />
      </div>
      <section className="mt-[10px]">
        <h3 className="text-[15px] leading-[20px] font-semibold">Country</h3>
        <ul className="mt-[3px] ml-[4px] text-[15px] leading-[25px]">
          <li className="flex items-center gap-2">
            <span className="size-[17px] bg-[#59a14f]" />
            Iraq
          </li>
          <li className="flex items-center gap-2">
            <span className="size-[17px] bg-[#d37295]" />
            Pakistan
          </li>
        </ul>
      </section>
    </aside>
  );
}

export default function App() {
  return (
    <div className="relative min-h-screen overflow-hidden bg-[#1b1b1b] font-['Noto_Sans','Open_Sans',sans-serif] text-white">
      <h1 className="absolute inset-x-0 top-4 text-center text-[30px] leading-[40px] font-medium">
        Attack vs Location <span className="font-light">Dashboard</span>
      </h1>
      <div className="grid grid-cols-[719fr_922fr_189px] gap-[10px] pr-[10px] pl-[13px]">
        <div className="pt-[76px]">
          <h2 className="pb-3 pl-[5px] text-2xl leading-[32px] font-medium">Number of casualties per region</h2>
          <Treemap />
          <h2 className="pt-[21px] pb-3 pl-[5px] text-[25px] leading-[32px] font-semibold">
            26 most dangerous cities <span className="font-light">in the 21st Century</span>
          </h2>
          <BarChart />
        </div>
        <div className="pt-[76px]">
          <h2 className="pb-3 pl-[6px] text-2xl leading-[32px] font-medium">Attacks per Country</h2>
          <div className="relative border border-[#e8e8e8] bg-[#323232] pr-1">
            <WorldMap />
            <div className="absolute bottom-px left-px flex gap-[7px] bg-white/90 px-[3px] text-[14px] leading-[18px] text-[#666666]">
              <a href="#mapbox">© 2024 Mapbox</a>
              <a href="#openstreetmap">© OpenStreetMap</a>
            </div>
          </div>
        </div>
        <Sidebar />
      </div>
    </div>
  );
}
